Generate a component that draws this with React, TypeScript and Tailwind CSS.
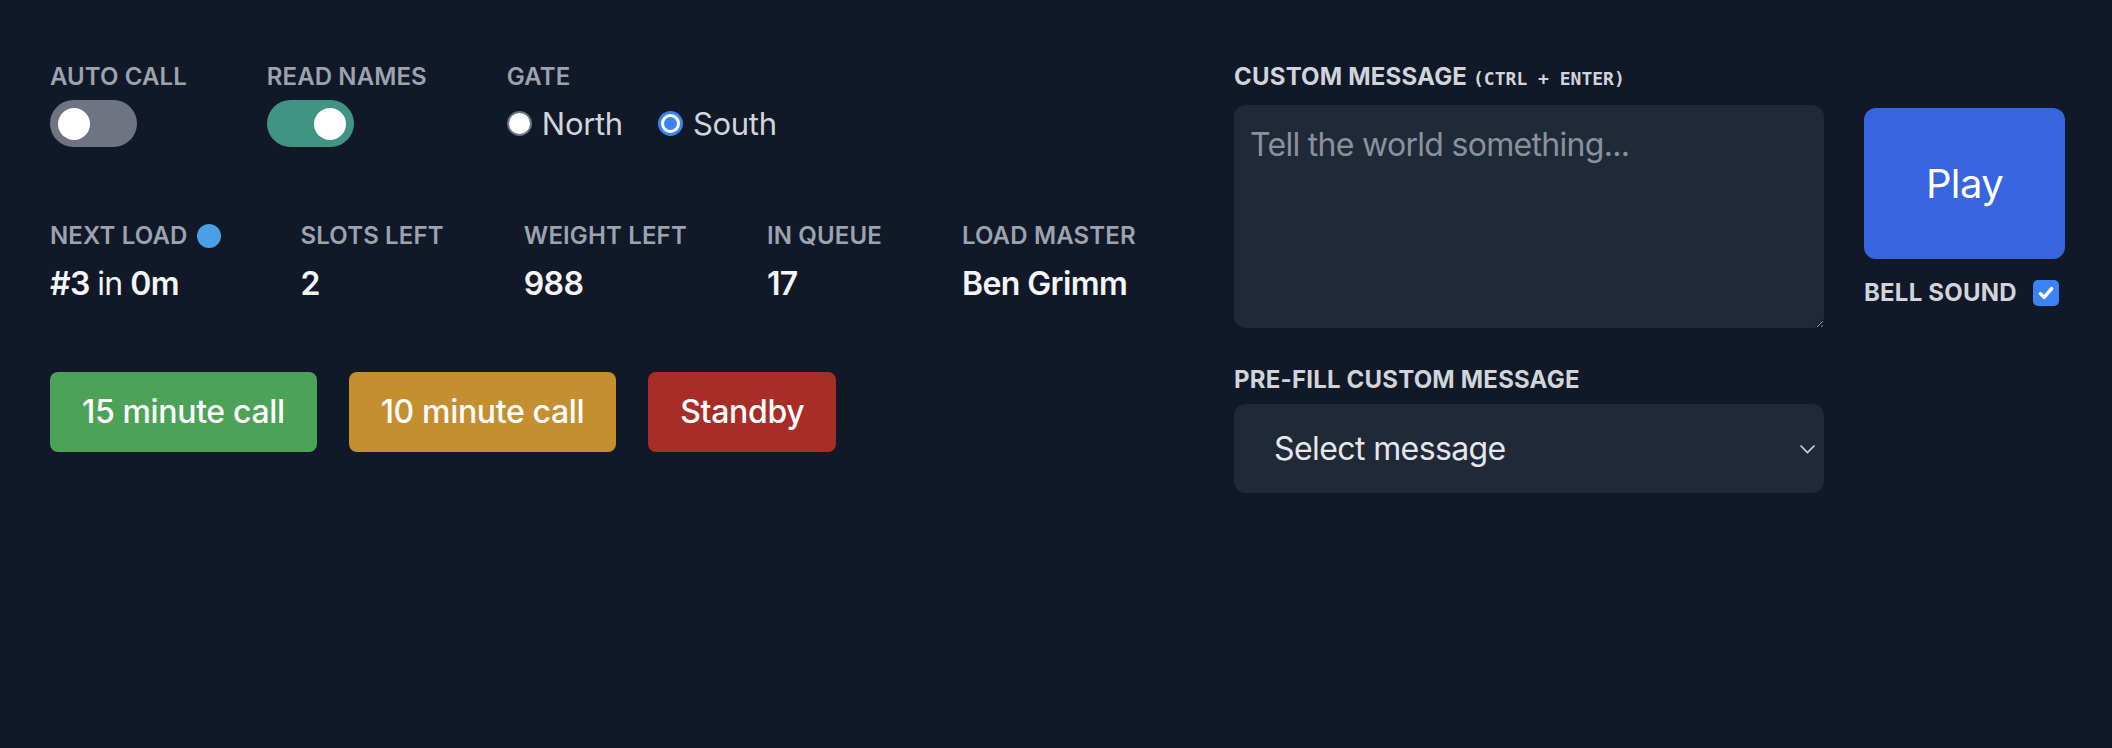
import { useState } from "react";

// toggle switch used for AUTO CALL / READ NAMES
function Toggle({ on, onClick }: { on: boolean; onClick: () => void }) {
  return (
    <button
      onClick={onClick}
      className={`flex h-[47px] w-[87px] items-center rounded-full px-[8px] ${
        on ? "justify-end bg-[#409484]" : "justify-start bg-[#6e7482]"
      }`}
    >
      <span className="h-[32px] w-[32px] rounded-full bg-white" />
    </button>
  );
}

function Radio({ label, checked, onClick }: { label: string; checked: boolean; onClick: () => void }) {
  return (
    <label onClick={onClick} className="flex cursor-pointer items-center gap-[10px]">
      {checked ? (
        <span className="flex h-[25px] w-[25px] items-center justify-center rounded-full border-[3px] border-[#3b82f6] bg-white">
          <span className="h-[13px] w-[13px] rounded-full bg-[#3b82f6]" />
        </span>
      ) : (
        <span className="h-[25px] w-[25px] rounded-full border-2 border-[#6b7280] bg-white" />
      )}
      <span className="text-[31px] leading-[40px] tracking-[-0.3px] text-[#d1d5db]">{label}</span>
    </label>
  );
}

function Stat({ label, children, dot }: { label: string; children: React.ReactNode; dot?: boolean }) {
  return (
    <div className="flex flex-col">
      <div className="flex h-[32px] items-center gap-[9px]">
        <span className="text-[24px] leading-[32px] font-semibold tracking-[0.15px] text-[#9ca3af]">{label}</span>
        {dot && <span className="h-[24px] w-[24px] rounded-full bg-[#4aa0e6]" />}
      </div>
      <div className="mt-[8px] text-[32px] leading-[48px] font-semibold tracking-[-0.6px] text-[#f3f4f6]">{children}</div>
    </div>
  );
}

export default function App() {
  const [autoCall, setAutoCall] = useState(false);
  const [readNames, setReadNames] = useState(true);
  const [gate, setGate] = useState("South");
  const [bell, setBell] = useState(true);

  return (
    <div className="flex min-h-screen w-full bg-[#111827] pt-[61px] pr-[47px] pl-[50px] font-['Inter',sans-serif]">
      {/* left panel */}
      <div className="flex flex-1 flex-col">
        <div className="flex gap-[80px]">
          <div className="flex flex-col">
            <span className="text-[24px] leading-[32px] font-semibold tracking-[0.1px] text-[#9ca3af]">AUTO CALL</span>
            <div className="mt-[7px]">
              <Toggle on={autoCall} onClick={() => setAutoCall(!autoCall)} />
            </div>
          </div>
          <div className="flex flex-col">
            <span className="text-[24px] leading-[32px] font-semibold tracking-[0.1px] text-[#9ca3af]">READ NAMES</span>
            <div className="mt-[7px]">
              <Toggle on={readNames} onClick={() => setReadNames(!readNames)} />
            </div>
          </div>
          <div className="flex flex-col">
            <span className="text-[24px] leading-[32px] font-semibold tracking-[0.1px] text-[#9ca3af]">GATE</span>
            <div className="mt-[7px] flex h-[47px] items-center gap-[35px]">
              <Radio label="North" checked={gate === "North"} onClick={() => setGate("North")} />
              <Radio label="South" checked={gate === "South"} onClick={() => setGate("South")} />
            </div>
          </div>
        </div>

        <div className="mt-[73px] flex gap-[80px]">
          <Stat label="NEXT LOAD" dot>
            #3 <span className="font-normal">in</span> 0m
          </Stat>
          <Stat label="SLOTS LEFT">2</Stat>
          <Stat label="WEIGHT LEFT">988</Stat>
          <Stat label="IN QUEUE">17</Stat>
          <Stat label="LOAD MASTER">Ben Grimm</Stat>
        </div>

        <div className="mt-[64px] flex gap-[32px]">
          <button className="h-[80px] rounded-[8px] bg-[#4ca257] px-[32px] text-[32px] font-medium tracking-[-0.35px] text-white">
            15 minute call
          </button>
          <button className="h-[80px] rounded-[8px] bg-[#c48f31] px-[32px] text-[32px] font-medium tracking-[-0.35px] text-white">
            10 minute call
          </button>
          <button className="h-[80px] rounded-[8px] bg-[#a92d27] px-[32px] text-[32px] font-medium tracking-[-0.35px] text-white">
            Standby
          </button>
        </div>
      </div>

      {/* right panel */}
      <div className="flex w-[831px] gap-[40px]">
        <div className="flex w-[590px] flex-col">
          <label className="text-[24px] leading-[32px] font-bold tracking-[0.2px] text-[#d1d5db]">
            CUSTOM MESSAGE{" "}
            <span className="font-['DejaVu_Sans_Mono',monospace] text-[18px] font-bold tracking-normal">(CTRL + ENTER)</span>
          </label>
          <textarea
            placeholder="Tell the world something..."
            className="mt-[10px] h-[223px] w-full rounded-[12px] bg-[#1f2937] p-[16px] text-[32px] leading-[48px] tracking-[-0.7px] text-[#e5e7eb] outline-none placeholder:text-[#8b919c]"
          />
          <label className="mt-[36px] text-[24px] leading-[32px] font-bold tracking-[0.2px] text-[#d1d5db]">
            PRE-FILL CUSTOM MESSAGE
          </label>
          <div className="relative mt-[8px]">
            <select className="h-[89px] w-full appearance-none rounded-[12px] bg-[#1f2937] pl-[40px] text-[32px] tracking-[-0.6px] text-[#e5e7eb] outline-none">
              <option>Select message</option>
            </select>
            <svg
              className="pointer-events-none absolute top-[40px] right-[8px] h-[10px] w-[17px]"
              viewBox="0 0 17 10"
              fill="none"
              stroke="#d1d5db"
              strokeWidth="1.6"
            >
              <path d="M1.5 1.5l7 7 7-7" />
            </svg>
          </div>
        </div>

        <div className="flex w-[201px] flex-col pt-[47px]">
          <button className="h-[151px] w-full rounded-[12px] bg-[#3864e0] text-[40px] tracking-[-0.6px] text-white">
            Play
          </button>
          <div className="mt-[18px] flex h-[32px] items-center">
            <span className="text-[24px] leading-[32px] font-bold tracking-[0.2px] text-[#d1d5db]">BELL SOUND</span>
            <button
              onClick={() => setBell(!bell)}
              className="ml-[16px] flex h-[26px] w-[26px] items-center justify-center rounded-[5px] bg-[#3b82f6]"
            >
              {bell && (
                <svg viewBox="0 0 16 16" className="h-[20px] w-[20px]" fill="none" stroke="white" strokeWidth="2.8" strokeLinecap="round" strokeLinejoin="round">
                  <path d="M3.5 8.5l3 3L12.5 4.5" />
                </svg>
              )}
            </button>
          </div>
        </div>
      </div>
    </div>
  );
}
